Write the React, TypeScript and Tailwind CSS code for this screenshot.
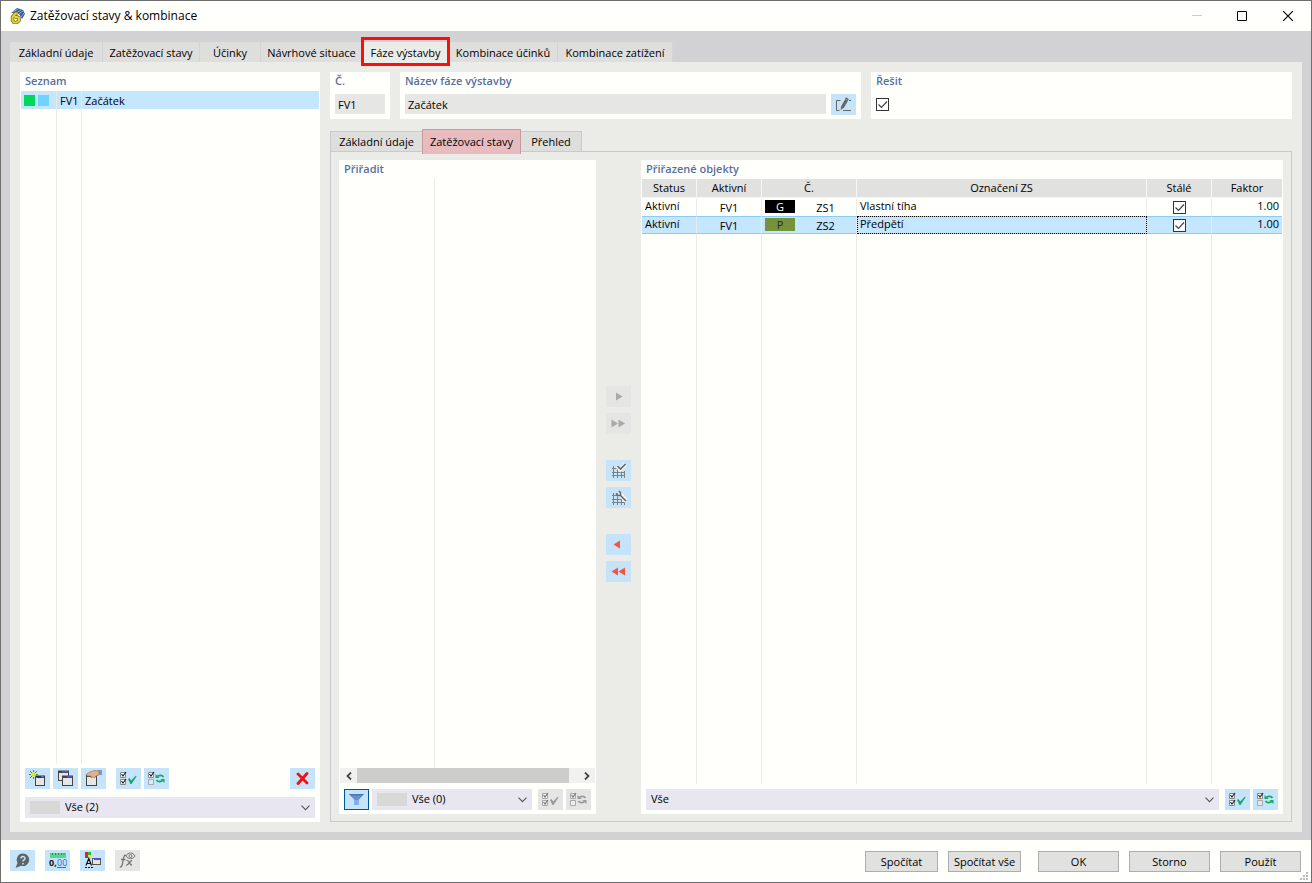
import React from 'react';
import clsx from 'clsx';

const mainTabs = [
  { label: 'Základní údaje', width: 'w-[93px]' },
  { label: 'Zatěžovací stavy', width: 'w-[97px]' },
  { label: 'Účinky', width: 'w-[61px]' },
  { label: 'Návrhové situace', width: 'w-[102px]' },
  { label: 'Fáze výstavby', width: 'w-[86px]' },
  { label: 'Kombinace účinků', width: 'w-[109px]' },
  { label: 'Kombinace zatížení', width: 'w-[115px]' },
];

const loadCases = [
  { id: 'ZS1', type: 'G', badge: 'bg-black text-white', name: 'Vlastní tíha', selected: false },
  { id: 'ZS2', type: 'P', badge: 'bg-[#76933c] text-[#1c2b33]', name: 'Předpětí', selected: true },
];

const AppIcon = () => (
  <svg width="16" height="16" viewBox="0 0 16 16">
    <path d="M2 5L8 0l6 2 2 4-3 5-3-5-5-1z" fill="#38598f" />
    <path d="M4 4l5-3M7 5l5-3M10 6l4-3M12 9l3-4" stroke="#8fb0da" strokeWidth="1" />
    <path d="M8.500 5.500H6.500L3.500 9v3.500l1.500 2h3l2-2V10L8 8.800 5.500 9" fill="none" stroke="#6c6420" strokeWidth="3.400" />
    <path d="M8.500 5.500H6.500L3.500 9v3.500l1.500 2h3l2-2V10L8 8.800 5.500 9" fill="none" stroke="#ead52c" strokeWidth="2" />
  </svg>
);

const EditIcon = () => (
  <svg width="17" height="15" viewBox="0 0 17 15" fill="none" stroke="#666">
    <path d="M5.500 3.500h-4v10h3M8 13.500h8M14 3.500h2" />
    <path d="M5.500 13l.8-4 4-7 2.800 1.500-4 7z" fill="#666" stroke="none" />
    <path d="M10.500 1l3 1.600" strokeWidth="1.600" />
  </svg>
);

const NewIcon = () => (
  <svg width="17" height="17" viewBox="0 0 17 17">
    <rect x="6.500" y="6.500" width="9" height="9" fill="#e6e6e6" stroke="#444" />
    <path d="M6 5.500h10v2.500H6z" fill="#333" />
    <path d="M12 6h3v1.500h-3z" fill="#5a65f0" />
    <path d="M4.500 0v9M0 4.500h9M1 1l7 7M8 1L1 8" stroke="#5c8f10" />
    <path d="M4.500 2v5M2 4.500h5" stroke="#d7f23a" strokeWidth="2" />
  </svg>
);

const CopyIcon = () => (
  <svg width="17" height="17" viewBox="0 0 17 17">
    <rect x="1.500" y="1.500" width="10" height="9" fill="#e6e6e6" stroke="#444" />
    <path d="M1 .5h11V3H1z" fill="#444" />
    <path d="M5 1h6v1.500H5z" fill="#4a55e8" />
    <rect x="5.500" y="6.500" width="10" height="9" fill="#e6e6e6" stroke="#444" />
    <path d="M5 5.500h11V8H5z" fill="#444" />
    <path d="M10 6h5v1.500h-5z" fill="#4a55e8" />
  </svg>
);

const PropertiesIcon = () => (
  <svg width="17" height="17" viewBox="0 0 17 17">
    <rect x="1.500" y="5.500" width="10" height="10" fill="#e6e6e6" stroke="#444" />
    <path d="M1 5h11v2H1z" fill="#444" />
    <path d="M13 0h4v5h-3z" fill="#6f9be0" />
    <path d="M1 4.500L5 2l5-1.500 4 .5v4l-3 1-1.500 2-1.500-1-2 1V6L2.500 6z" fill="#e3b18a" stroke="#9b7357" strokeWidth=".7" />
  </svg>
);

const SelectAllIcon = ({ muted = false }: { muted?: boolean }) => (
  <svg width="17" height="15" viewBox="0 0 17 15" fill="none">
    <path d="M.5 1.500v5h5v-5zM.5 8.500v5h5v-5z" fill={muted ? '#eee' : '#fff'} stroke={muted ? '#aaa' : '#888'} />
    <path d="M1.500 3l1.500 2L6 1M1.500 10l1.500 2L6 8" stroke={muted ? '#777' : '#222'} strokeWidth="1.200" />
    <path d="M8 8l1.500-1 1.700 2.500L16 4.500l.5 1-5 7.500h-1z" fill={muted ? '#999' : '#14a86c'} />
  </svg>
);

const InvertIcon = ({ muted = false }: { muted?: boolean }) => (
  <svg width="17" height="15" viewBox="0 0 17 15" fill="none">
    <path d="M.5 1.500v5h5v-5z" fill={muted ? '#eee' : '#fff'} stroke={muted ? '#aaa' : '#888'} />
    <path d="M.5 8.500v5h5v-5z" fill={muted ? '#eee' : '#d9ebf7'} stroke="#aaa" />
    <path d="M1.500 3l1.500 2L6 1" stroke={muted ? '#777' : '#222'} strokeWidth="1.200" />
    <path d="M15.500 6c-1.500-2-4-1.800-6-.8M8.500 9c1.500 2 4 1.800 6 .8" stroke={muted ? '#999' : '#14a86c'} strokeWidth="1.800" />
    <path d="M7.500 3v4h4zM16.500 12V8h-4z" fill={muted ? '#999' : '#14a86c'} />
  </svg>
);

const DeleteIcon = () => (
  <svg width="13" height="13" viewBox="0 0 13 13">
    <path d="M2 2l9 9M11 1.500l-9 10" stroke="#fa0d0d" strokeWidth="2.800" strokeLinecap="round" />
  </svg>
);

const FilterIcon = () => (
  <svg width="15" height="13" viewBox="0 0 15 13">
    <path d="M0 1h15L9.500 7v5h-4V7z" fill="#6590cf" />
    <path d="M0 1h15l-1.500 1.500h-12z" fill="#4b76b8" />
    <path d="M5.500 7h4v5h-4z" fill="#82aaf0" />
  </svg>
);

const MeshIcon = ({ tool }: { tool: 'check' | 'wrench' }) => (
  <svg width="16" height="16" viewBox="0 0 16 16" fill="none">
    <path d="M2.500 3v12M6.500 3v12M10.500 7v8M13.500 8v7" stroke="#808080" />
    <path d="M1 5.500h7M1 9.500h13M1 12.500h13" stroke="#808080" />
    {tool === 'check' ? (
      <>
        <path d="M6 3l3.500 3.500L14.500 1" stroke="#f4f4f4" strokeWidth="4" />
        <path d="M6.500 3l3 3L14.500 1" stroke="#666" strokeWidth="1.600" />
      </>
    ) : (
      <>
        <path d="M7 4l3 1 5 6" stroke="#f4f4f4" strokeWidth="4.500" />
        <path d="M5 3.500L7 5.500h2.500V3L8 1M9 5l6 6" stroke="#666" strokeWidth="1.600" />
      </>
    )}
  </svg>
);

const Arrow = ({ color, left = false, double = false }: { color: string; left?: boolean; double?: boolean }) => (
  <svg width="15" height="9" viewBox="0 0 15 9" fill={color}>
    {double ? (
      <path d={left ? 'M7 .5v8L.5 4.500zM14 .5v8L7.500 4.500z' : 'M.5 .5v8L7 4.500zM7.500 .5v8l6.500-4z'} />
    ) : (
      <path d={left ? 'M9 .5v8L2.500 4.500z' : 'M5 .5v8l6.500-4z'} />
    )}
  </svg>
);

const HelpIcon = () => (
  <svg width="17" height="16" viewBox="0 0 17 16">
    <path d="M9 .5a6.300 6.300 0 1 1-2 12.300L1.500 15l2-5A6.300 6.300 0 0 1 9 .5z" fill="#5d6467" />
    <path d="M7 5.500C7 3 11 3 11 5.300c0 1.700-2 1.500-2 3.200M9 10v1.500" fill="none" stroke="#c5e3f9" strokeWidth="1.500" />
  </svg>
);

const UnitsIcon = () => (
  <svg width="18" height="17" viewBox="0 0 18 17">
    <path d="M1 1h16v5H1z" fill="#53d78c" />
    <path d="M3.500 1v2M6.500 1v2M9.500 1v2M12.500 1v2M15 1v2" stroke="#249557" />
    <text x="0" y="14" fontSize="9" fontWeight="700" fill="#111">0,</text>
    <text x="8" y="14" fontSize="9" fill="#3468d8">00</text>
    <path d="M8 15.500h9" stroke="#3468d8" />
  </svg>
);

const DisplayIcon = () => (
  <svg width="18" height="17" viewBox="0 0 18 17">
    <path d="M1 0h3v3H1z" fill="#f01c1c" />
    <path d="M4 0h3v3H4z" fill="#35b52f" />
    <path d="M1 3h3v3H1z" fill="#3a52e0" />
    <path d="M4 3h3v3H4z" fill="#f2e327" />
    <path d="M2 13.500L4.800 6.500 7.500 13.500M3 11.500h3.500M1 15.500h2M4 15.500h2M7 15.500h2" fill="none" stroke="#111" strokeWidth="1.200" />
    <rect x="8.500" y="6.500" width="8" height="6" fill="#e6e6e6" stroke="#555" />
    <path d="M10 6h6v2h-6z" fill="#4a55d8" />
  </svg>
);

const FormulaIcon = () => (
  <svg width="17" height="17" viewBox="0 0 17 17" fill="none" stroke="#777">
    <path d="M7 3.500C5 2.500 4.800 5 4.200 8S3.200 16 .8 14.800M2 7.500h4.500" strokeWidth="1.300" />
    <path d="M7.500 8.500c3-1 2.500 5 5.500 4.500M13 8.500c-2 0-3.500 5.500-6 4.500" strokeWidth="1.300" />
    <path d="M7 4c2-4 7-4 9 0-2 3.500-7 3.500-9 0z" />
    <circle cx="11.500" cy="4" r="1.500" />
  </svg>
);

const Chevron = () => (
  <svg className="pointer-events-none absolute right-[5px] top-2" width="9" height="6" viewBox="0 0 9 6">
    <path d="M.5 .7l4 4 4-4" fill="none" stroke="#555" strokeWidth="1.100" />
  </svg>
);

interface ToolButtonProps {
  label: string;
  disabled?: boolean;
  className?: string;
  children: React.ReactNode;
}

const ToolButton = ({ label, disabled = false, className, children }: ToolButtonProps) => (
  <button
    type="button"
    aria-label={label}
    disabled={disabled}
    className={clsx(
      'flex h-[21px] w-[25px] shrink-0 items-center justify-center',
      disabled ? 'bg-[#e5e5e3]' : 'bg-[#c5e3f9]',
      className,
    )}
  >
    {children}
  </button>
);

const Combo = ({ label, value, swatch = false, className }: { label: string; value: string; swatch?: boolean; className?: string }) => (
  <div className={clsx('relative h-[21px] bg-[#e8e6f0]', className)}>
    {swatch && <span className="pointer-events-none absolute left-[5px] top-1 h-[13px] w-[30px] bg-[#d8d8d6]" />}
    <select aria-label={label} className={clsx('block h-full w-full appearance-none pr-5', swatch ? 'pl-10' : 'pl-[5px]')}>
      <option>{value}</option>
    </select>
    <Chevron />
  </div>
);

const CheckBox = ({ id, label }: { id?: string; label?: string }) => (
  <span className="relative block h-[13px] w-[13px]">
    <input id={id} aria-label={label} type="checkbox" defaultChecked className="peer block h-[13px] w-[13px] appearance-none border border-[#333] bg-white" />
    <svg className="pointer-events-none absolute inset-0 hidden peer-checked:block" width="13" height="13" viewBox="0 0 13 13">
      <path d="M2.500 6.500l3 3 5.500-6" fill="none" stroke="#444" strokeWidth="1.200" />
    </svg>
  </span>
);

const titleClass = 'block pb-[2px] font-semibold leading-[17px] text-[#586f9e]';

const TitleBar = () => (
  <header className="flex h-[30px] shrink-0 items-center bg-[#fffffc] pl-2">
    <AppIcon />
    <h1 className="ml-[5px] grow text-xs">Zatěžovací stavy &amp; kombinace</h1>
    <button type="button" aria-label="Minimalizovat" disabled className="flex h-full w-[45px] items-center justify-center">
      <svg width="10" height="10"><path d="M0 4.500h10" stroke="#ccc" /></svg>
    </button>
    <button type="button" aria-label="Maximalizovat" className="flex h-full w-[45px] items-center justify-center pb-px">
      <svg width="10" height="10"><path d="M.5 .5h9v9h-9z" fill="none" stroke="#000" /></svg>
    </button>
    <button type="button" aria-label="Zavřít" className="flex h-full w-[47px] items-center justify-center pb-px">
      <svg width="10" height="10"><path d="M0 0l10 10M10 0L0 10" stroke="#000" strokeWidth="1.200" /></svg>
    </button>
  </header>
);

const ListPanel = () => (
  <section className="flex w-[300px] shrink-0 flex-col bg-[#fffffc]">
    <h2 className={clsx(titleClass, 'px-[5px]')}>Seznam</h2>
    <div className="mx-px grid h-[18px] grid-cols-[36px_25px_1fr] items-center bg-[#c4e6ff]">
      <span className="flex h-full items-center gap-[3px] border-r border-[#e8e8e6] pb-[2px] pl-[3px]">
        <i className="h-[11px] w-[11px] bg-[#00d85c]" />
        <i className="h-[11px] w-[11px] bg-[#71d2ff]" />
      </span>
      <span className="h-full border-r border-[#e8e8e6] pl-[3px] leading-[20px]">FV1</span>
      <span className="h-full pl-[3px] leading-[20px]">Začátek</span>
    </div>
    <div className="mx-px grid grow grid-cols-[36px_25px_1fr]">
      <span className="border-r border-[#ebebe9]" />
      <span className="border-r border-[#ebebe9]" />
    </div>
    <div className="flex gap-[3px] px-[5px] pt-1">
      <ToolButton label="Nový"><NewIcon /></ToolButton>
      <ToolButton label="Kopírovat"><CopyIcon /></ToolButton>
      <ToolButton label="Vlastnosti"><PropertiesIcon /></ToolButton>
      <ToolButton label="Vybrat vše" className="ml-[7px]"><SelectAllIcon /></ToolButton>
      <ToolButton label="Obrátit výběr"><InvertIcon /></ToolButton>
      <ToolButton label="Smazat" className="ml-auto"><DeleteIcon /></ToolButton>
    </div>
    <Combo label="Filtr seznamu" value="Vše (2)" swatch className="mx-[5px] mb-1 mt-2" />
  </section>
);

const AssignPanel = () => (
  <section className="flex w-[257px] shrink-0 flex-col bg-[#fffffc]">
    <h2 className={clsx(titleClass, 'px-[5px]')}>Přiřadit</h2>
    <div className="w-24 grow border-r border-[#ebebe9]" />
    <div className="mx-px flex h-[15px] bg-[#f1f1ef]">
      <button type="button" aria-label="Posunout doleva" className="flex w-[17px] items-center justify-center">
        <svg width="6" height="8"><path d="M5 .5L1.500 4 5 7.500" fill="none" stroke="#444" strokeWidth="1.800" /></svg>
      </button>
      <div className="w-[212px] bg-[#cdcdcb]" />
      <button type="button" aria-label="Posunout doprava" className="ml-auto flex w-[17px] items-center justify-center">
        <svg width="6" height="8"><path d="M1 .5L4.500 4 1 7.500" fill="none" stroke="#444" strokeWidth="1.800" /></svg>
      </button>
    </div>
    <div className="flex gap-[3px] px-[5px] pb-1 pt-[6px]">
      <ToolButton label="Filtr" className="border border-[#005499]"><FilterIcon /></ToolButton>
      <Combo label="Filtr objektů" value="Vše (0)" swatch className="grow" />
      <ToolButton label="Vybrat vše" disabled className="ml-[3px]"><SelectAllIcon muted /></ToolButton>
      <ToolButton label="Obrátit výběr" disabled><InvertIcon muted /></ToolButton>
    </div>
  </section>
);

const TransferButtons = () => (
  <div className="flex w-[45px] shrink-0 flex-col items-center justify-center gap-[26px] pb-[6px]">
    <div className="flex flex-col gap-[6px]">
      <ToolButton label="Přidat" disabled><Arrow color="#a9a9a9" /></ToolButton>
      <ToolButton label="Přidat vše" disabled><Arrow color="#a9a9a9" double /></ToolButton>
    </div>
    <div className="flex flex-col gap-[6px]">
      <ToolButton label="Vybrat v modelu"><MeshIcon tool="check" /></ToolButton>
      <ToolButton label="Nastavit v modelu"><MeshIcon tool="wrench" /></ToolButton>
    </div>
    <div className="flex flex-col gap-[6px]">
      <ToolButton label="Odebrat"><Arrow color="#fa5240" left /></ToolButton>
      <ToolButton label="Odebrat vše"><Arrow color="#fa5240" left double /></ToolButton>
    </div>
  </div>
);

const AssignedPanel = () => (
  <section className="flex min-w-0 grow flex-col bg-[#fffffc]">
    <h2 className={clsx(titleClass, 'px-[5px]')}>Přiřazené objekty</h2>
    <div className="mx-px">
      <table className="w-full table-fixed border-separate border-spacing-0">
        <colgroup>
          <col className="w-[55px]" />
          <col className="w-[65px]" />
          <col className="w-[95px]" />
          <col />
          <col className="w-[65px]" />
          <col className="w-[70px]" />
        </colgroup>
        <thead>
          <tr>
            {['Status', 'Aktivní', 'Č.', 'Označení ZS', 'Stálé', 'Faktor'].map((head) => (
              <th key={head} scope="col" className="border-b border-r border-[#f6f6f4] bg-[#e1e1df] p-0 font-normal leading-[18px] last:border-r-0">{head}</th>
            ))}
          </tr>
        </thead>
        <tbody>
          {loadCases.map((row) => (
            <tr
              key={row.id}
              className={clsx(
                'h-[18px] align-top *:border-y *:border-r *:border-r-[#ebebe9] *:p-0 *:leading-[14px]',
                row.selected ? 'bg-[#c4e6ff] *:border-y-[#8acdfa]' : '*:border-y-transparent',
              )}
            >
              <td className="pl-[3px]!">Aktivní</td>
              <td className="pt-[2px]! text-center">FV1</td>
              <td>
                <div className="flex items-start pl-[3px]">
                  <span className="pt-px">
                    <span className={clsx('block h-[13px] w-[30px] text-center leading-[13px]', row.badge)}>{row.type}</span>
                  </span>
                  <span className="grow pt-[2px] text-center">{row.id}</span>
                </div>
              </td>
              <td className={clsx('pl-[3px]!', row.selected && 'outline-1 -outline-offset-1 outline-dotted outline-black')}>{row.name}</td>
              <td>
                <div className="flex justify-center pt-[2px]"><CheckBox label={`Stálé ${row.id}`} /></div>
              </td>
              <td className="border-r-0! pr-[3px]! text-right">1.00</td>
            </tr>
          ))}
        </tbody>
      </table>
    </div>
    <div className="mx-px grid grow grid-cols-[55px_65px_95px_1fr_65px_70px] *:border-r *:border-[#ebebe9]">
      <span />
      <span />
      <span />
      <span />
      <span />
    </div>
    <div className="flex gap-[3px] px-[5px] pb-1 pt-[5px]">
      <Combo label="Filtr přiřazených objektů" value="Vše" className="grow" />
      <ToolButton label="Vybrat vše" className="ml-[3px]"><SelectAllIcon /></ToolButton>
      <ToolButton label="Obrátit výběr"><InvertIcon /></ToolButton>
    </div>
  </section>
);

const Footer = () => (
  <footer className="relative flex shrink-0 items-start justify-between bg-[#fffffc] px-[9px] pb-[10px] pt-[10px]">
    <div className="flex gap-[10px]">
      <ToolButton label="Nápověda"><HelpIcon /></ToolButton>
      <ToolButton label="Jednotky"><UnitsIcon /></ToolButton>
      <ToolButton label="Zobrazení"><DisplayIcon /></ToolButton>
      <ToolButton label="Vzorce" disabled><FormulaIcon /></ToolButton>
    </div>
    <div className="flex gap-[10px] pr-px pt-px *:h-[21px] *:border *:border-[#adadab] *:bg-[#e1e1df] *:leading-[19px]">
      <button type="button" className="w-[73px]">Spočítat</button>
      <button type="button" className="mr-[7px] w-[73px] whitespace-nowrap">Spočítat vše</button>
      <button type="button" className="w-[81px]">OK</button>
      <button type="button" className="w-[81px]">Storno</button>
      <button type="button" className="w-[81px]">Použít</button>
    </div>
    <svg className="absolute bottom-[2px] right-[3px]" width="8" height="8" fill="#bbb">
      <path d="M6 0h2v2H6zM3 3h2v2H3zM6 3h2v2H6zM0 6h2v2H0zM3 6h2v2H3zM6 6h2v2H6z" />
    </svg>
  </footer>
);

const App = () => {
  return (
    <div className="flex h-screen min-h-[560px] min-w-[1000px] flex-col border border-[#6f6f6f] bg-[#d2d2d4] font-['Open_Sans','Noto_Sans',sans-serif] text-[11px] text-black">
      <TitleBar />
      <main className="flex grow flex-col px-[9px] pb-2 pt-[11px]">
        <nav role="tablist" className="flex h-5 shrink-0">
          {mainTabs.map((tab) => {
            const active = tab.label === 'Fáze výstavby';
            return (
              <button
                key={tab.label}
                type="button"
                role="tab"
                aria-selected={active}
                className={clsx('relative shrink-0 whitespace-nowrap border-r border-[#d4d4d2] leading-[22px]', tab.width, active ? 'bg-[#ebece8]' : 'bg-[#dededc]')}
              >
                {tab.label}
                {active && <span className="absolute -left-[2px] -right-[2px] -top-[5px] z-10 h-[29px] border-3 border-[#fa0f0f]" />}
              </button>
            );
          })}
        </nav>
        <div className="flex grow gap-[10px] bg-[#ebece8] p-[10px]">
          <ListPanel />
          <div className="flex min-w-0 grow flex-col">
            <div className="flex h-[47px] shrink-0 gap-[10px]">
              <div className="w-[60px] bg-[#fffffc]">
                <label htmlFor="phase-no" className={clsx(titleClass, 'px-[5px]')}>Č.</label>
                <input id="phase-no" readOnly defaultValue="FV1" className="mx-[5px] mt-[3px] block h-5 w-[50px] bg-[#e6e6e4] px-[3px]" />
              </div>
              <div className="min-w-0 grow-[461] basis-0 bg-[#fffffc]">
                <label htmlFor="phase-name" className={clsx(titleClass, 'px-[5px]')}>Název fáze výstavby</label>
                <div className="flex gap-[5px] px-[5px] pt-[3px]">
                  <input id="phase-name" readOnly defaultValue="Začátek" className="h-5 min-w-0 grow bg-[#e6e6e4] px-[3px]" />
                  <ToolButton label="Upravit název"><EditIcon /></ToolButton>
                </div>
              </div>
              <div className="min-w-0 grow-[421] basis-0 bg-[#fffffc]">
                <label htmlFor="solve" className={clsx(titleClass, 'px-[5px]')}>Řešit</label>
                <div className="px-[5px] pt-[7px]"><CheckBox id="solve" /></div>
              </div>
            </div>
            <div role="tablist" className="z-10 -mb-[3px] mt-[10px] flex h-[25px] shrink-0 items-start">
              <button type="button" role="tab" className="mt-[2px] h-[21px] w-[92px] border border-r-0 border-[#c9c9d0] bg-[#dededc] leading-[20px]">Základní údaje</button>
              <button type="button" role="tab" aria-selected className="h-[25px] w-[99px] border border-b-0 border-[#c79a9f] bg-[#e8bcbe] leading-[24px]">Zatěžovací stavy</button>
              <button type="button" role="tab" className="mt-[2px] h-[21px] w-[61px] border border-l-0 border-[#c9c9d0] bg-[#dededc] leading-[20px]">Přehled</button>
            </div>
            <div className="flex grow border border-[#c9c9d0] px-2 pb-[7px] pt-2">
              <AssignPanel />
              <TransferButtons />
              <AssignedPanel />
            </div>
          </div>
        </div>
      </main>
      <Footer />
    </div>
  );
};

export default App;
